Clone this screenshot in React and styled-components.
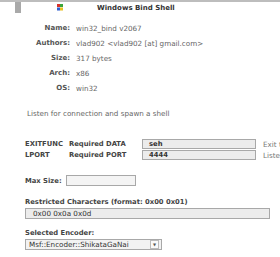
import React from 'react'
import styled, { createGlobalStyle } from 'styled-components'

const Global = createGlobalStyle`
  html, body { margin: 0; padding: 0; background: #fff; }
  body { font-family: "DejaVu Sans", Verdana, sans-serif; font-size: 7.2px; color: #555; }
`

const Page = styled.div`
  width: 280px;
  height: 257px;
  overflow: hidden;
  border-top: 2px solid #bdbdbd;
  box-sizing: border-box;
`

const Header = styled.div`
  display: flex;
  align-items: flex-start;
  height: 14px;
`

const Tab = styled.div`
  width: 6px;
  height: 11px;
  margin-left: 15px;
  background: #a9a9a9;
`

const Flag = styled.svg`
  margin-left: 36px;
  margin-top: 2px;
`

const Title = styled.div`
  margin-left: 34px;
  margin-top: 2px;
  font-weight: bold;
  color: #333;
  font-size: 7px;
`

const Info = styled.div`
  display: grid;
  grid-template-columns: 70px auto;
  column-gap: 6px;
  row-gap: 6px;
  margin-top: 8px;
  line-height: 9px;
`

const Label = styled.div`
  text-align: right;
  font-weight: bold;
  font-size: 7px;
  color: #555;
`

const Value = styled.div`
  color: #666;
`

const Desc = styled.div`
  margin: 16px 0 0 27px;
  color: #666;
`

const Options = styled.div`
  display: grid;
  grid-template-columns: 44px 37px 36px 114px auto;
  row-gap: 1px;
  margin: 21px 0 0 25px;
  align-items: center;
  white-space: nowrap;
`

const OptText = styled.div`
  font-weight: bold;
  font-size: 6.8px;
  color: #444;
`

const Field = styled.div`
  box-sizing: border-box;
  height: ${p => p.h || 10}px;
  width: ${p => p.w}px;
  border: 1px solid #a8a8a8;
  background: ${p => p.bg || '#ececec'};
  padding-left: ${p => p.pad || 6}px;
  line-height: ${p => (p.h || 10) - 2}px;
  color: #333;
  font-weight: ${p => (p.bold ? 'bold' : 'normal')};
  font-size: ${p => (p.bold ? 6.8 : 7.2)}px;
`

const Help = styled.div`
  padding-left: 7px;
  color: #777;
  overflow: hidden;
`

const MaxRow = styled.div`
  display: flex;
  align-items: center;
  gap: 4px;
  margin: 15px 0 0 25px;
`

const Block = styled.div`
  margin: ${p => p.top}px 0 0 25px;
  display: flex;
  flex-direction: column;
  gap: 2px;
`

const BoldLabel = styled.div`
  font-weight: bold;
  font-size: 6.8px;
  color: #444;
`

const Select = styled.div`
  box-sizing: border-box;
  width: 137px;
  height: 11px;
  border: 1px solid #a8a8a8;
  background: #f2f2f2;
  display: flex;
  align-items: center;
  justify-content: space-between;
  padding-left: 3px;
  color: #333;
`

const Arrow = styled.div`
  width: 7px;
  height: 7px;
  margin-right: 2px;
  border: 1px solid #bbb;
  background: #fafafa;
  display: flex;
  align-items: center;
  justify-content: center;
  font-size: 4px;
  color: #555;
`

export default function App() {
  const info = [
    ['Name:', 'win32_bind v2067'],
    ['Authors:', 'vlad902 <vlad902 [at] gmail.com>'],
    ['Size:', '317 bytes'],
    ['Arch:', 'x86'],
    ['OS:', 'win32'],
  ]
  const opts = [
    ['EXITFUNC', 'DATA', 'seh', 'Exit technique'],
    ['LPORT', 'PORT', '4444', 'Listen port'],
  ]
  return (
    <>
      <Global />
      <Page>
        <Header>
          <Tab />
          <Flag width="6" height="7" viewBox="0 0 6 7">
            <rect x="0" y="0" width="3" height="3" fill="#d8322a" />
            <rect x="3" y="0" width="3" height="3" fill="#3aa53a" />
            <rect x="0" y="3.5" width="3" height="3" fill="#2f5fd0" />
            <rect x="3" y="3.5" width="3" height="3" fill="#e8c021" />
          </Flag>
          <Title>Windows Bind Shell</Title>
        </Header>
        <Info>
          {info.map(([l, v]) => (
            <React.Fragment key={l}>
              <Label>{l}</Label>
              <Value>{v}</Value>
            </React.Fragment>
          ))}
        </Info>
        <Desc>Listen for connection and spawn a shell</Desc>
        <Options>
          {opts.map(([n, t, v, h]) => (
            <React.Fragment key={n}>
              <OptText>{n}</OptText>
              <OptText>Required</OptText>
              <OptText>{t}</OptText>
              <Field w={114} bold>{v}</Field>
              <Help>{h}</Help>
            </React.Fragment>
          ))}
        </Options>
        <MaxRow>
          <BoldLabel>Max Size:</BoldLabel>
          <Field w={70} h={11} bg="#f4f4f4" />
        </MaxRow>
        <Block top={12}>
          <BoldLabel>Restricted Characters (format: 0x00 0x01)</BoldLabel>
          <Field w={245} h={11} pad={7}>0x00 0x0a 0x0d</Field>
        </Block>
        <Block top={10}>
          <BoldLabel>Selected Encoder:</BoldLabel>
          <Select>
            <span>Msf::Encoder::ShikataGaNai</span>
            <Arrow>▼</Arrow>
          </Select>
        </Block>
      </Page>
    </>
  )
}
